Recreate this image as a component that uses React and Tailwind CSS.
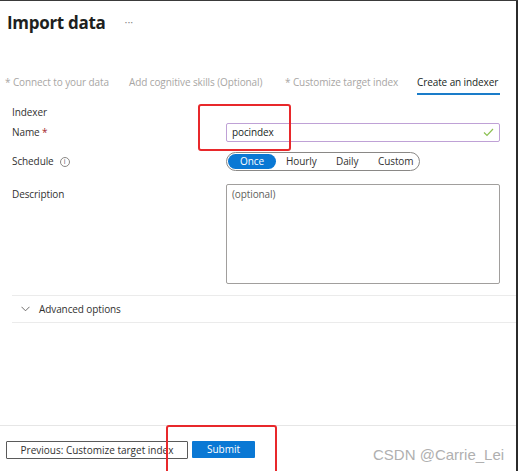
import React from "react";

export default function App() {
  const font = { fontFamily: '"Open Sans", "Noto Sans", sans-serif' };
  return (
    <div
      className="relative w-[518px] h-[471px] bg-white overflow-hidden flex flex-col border-t border-[#3a3a3a]"
      style={font}
    >
      {/* right edge */}
      <div className="absolute right-0 top-0 h-full w-[2px] bg-[#2b2b2b]" />

      {/* header */}
      <div className="flex items-center h-[24px] mt-[9px] pl-[7px]">
        <span className="text-[17px] font-bold leading-none text-[#201f1e] tracking-[-0.3px]">
          Import data
        </span>
        <span className="ml-[19px] text-[11px] text-[#8a8886] leading-none -mt-[2px]">···</span>
      </div>

      {/* tabs */}
      <div className="flex mt-[38px] pl-[5px] h-[23px] text-[10px] leading-[20px] tracking-[-0.1px]">
        <div className="w-[124px] text-[#a8a6a4] whitespace-nowrap">* Connect to your data</div>
        <div className="w-[156px] text-[#a8a6a4] whitespace-nowrap">Add cognitive skills (Optional)</div>
        <div className="w-[132px] text-[#a8a6a4] whitespace-nowrap">* Customize target index</div>
        <div className="relative text-[#201f1e] whitespace-nowrap">
          Create an indexer
          <div className="absolute left-0 -right-[2px] top-[21px] h-[2px] bg-[#1a7cc9]" />
        </div>
      </div>

      {/* form */}
      <div className="flex flex-col pl-[12px] pr-[18px] mt-[9px] text-[10px] tracking-[-0.1px] text-[#323130]">
        <div className="h-[16px] leading-[16px]">Indexer</div>
        <div className="flex items-center mt-[3px] h-[19px]">
          <div className="w-[214px]">
            Name <span className="text-[#a4262c]">*</span>
          </div>
          <div className="flex-1 h-[19px] border border-[#bfa1d6] rounded-[2px] flex items-center px-[5px]">
            <span className="flex-1 text-[#201f1e]">pocindex</span>
            <svg width="11" height="9" viewBox="0 0 11 9" fill="none">
              <path d="M1 4.5 L4 7.5 L10 1" stroke="#8cc152" strokeWidth="1.2" />
            </svg>
          </div>
        </div>
        <div className="flex items-center mt-[10px] h-[19px]">
          <div className="w-[214px] flex items-center">
            Schedule
            <span className="ml-[6px] w-[10px] h-[10px] rounded-full border border-[#8a8886] text-[7px] leading-none flex items-center justify-center text-[#605e5c]">
              i
            </span>
          </div>
          <div className="w-[194px] h-[19px] rounded-full border border-[#8a8886] flex items-center px-[1px]">
            <div className="w-[48px] h-[15px] rounded-full bg-[#0a78d4] text-white flex items-center justify-center">
              Once
            </div>
            <div className="ml-[10px] w-[40px] text-[#323130]">Hourly</div>
            <div className="ml-[10px] w-[42px] text-[#323130]">Daily</div>
            <div className="text-[#323130]">Custom</div>
          </div>
        </div>
        <div className="flex mt-[13px]">
          <div className="w-[214px] pt-[3px]">Description</div>
          <div className="flex-1 h-[100px] border border-[#a19f9d] rounded-[2px] px-[5px] pt-[2px] text-[#605e5c]">
            (optional)
          </div>
        </div>
      </div>

      {/* advanced options */}
      <div className="ml-[12px] mt-[11px] border-t border-b border-[#ebebeb] h-[28px] flex items-center pl-[9px] text-[10px] tracking-[-0.1px] text-[#323130]">
        <svg width="9" height="6" viewBox="0 0 9 6" fill="none">
          <path d="M0.5 0.8 L4.5 4.8 L8.5 0.8" stroke="#605e5c" strokeWidth="0.9" />
        </svg>
        <span className="ml-[9px]">Advanced options</span>
      </div>

      <div className="flex-1" />

      {/* footer */}
      <div className="h-[46px] border-t border-[#e6e6e6] flex items-start pt-[15px] pl-[6px] mr-[2px] text-[10px]">
        <div className="h-[18px] w-[182px] border border-[#5a5a5a] rounded-[1px] flex items-center justify-center text-[#323130] whitespace-nowrap">
          Previous: Customize target index
        </div>
        <div className="ml-[4px] h-[17px] w-[63px] bg-[#0a78d4] rounded-[1px] flex items-center justify-center text-white">
          Submit
        </div>
      </div>

      {/* annotations */}
      <div className="absolute left-[198px] top-[103px] w-[93px] h-[47px] border-2 border-[#e8282b] rounded-[3px]" />
      <div className="absolute left-[166px] top-[424px] w-[111px] h-[60px] border-2 border-[#e8282b] rounded-[3px]" />

      {/* watermark */}
      <div
        className="absolute left-[373px] top-[445px] text-[15px] leading-[18px] text-[#b0b0b0] whitespace-nowrap"
        style={{ fontFamily: '"Liberation Sans", Arial, sans-serif' }}
      >
        CSDN @Carrie_Lei
      </div>
    </div>
  );
}
